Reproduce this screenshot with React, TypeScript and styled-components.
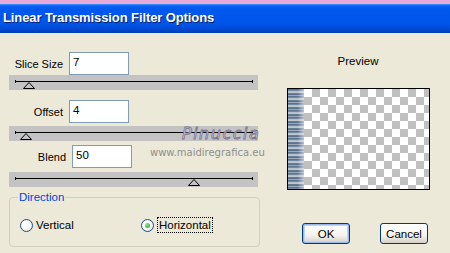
import React from "react";
import styled, { createGlobalStyle } from "styled-components";

const GlobalStyle = createGlobalStyle`
  html, body {
    margin: 0;
    padding: 0;
    background: #ece9d8;
    overflow: hidden;
  }
  * {
    box-sizing: border-box;
  }
`;

const Window = styled.div`
  position: relative;
  width: 450px;
  height: 253px;
  background: #ece9d8;
  font-family: "Liberation Sans", Arial, sans-serif;
  font-size: 11px;
  color: #000;
  overflow: hidden;
`;

const DesktopStrip = styled.div`
  height: 4px;
  background: #e6aad8;
`;

const TitleBar = styled.div`
  height: 29px;
  display: flex;
  align-items: center;
  padding: 0 0 2px 3px;
  background: linear-gradient(
    to bottom,
    #3d95ff 0px,
    #0a5fef 2px,
    #0058ee 5px,
    #0055e8 20px,
    #0047d0 26px,
    #003cb0 29px
  );
  color: #fff;
  font-family: "Liberation Sans", Arial, sans-serif;
  font-weight: bold;
  font-size: 13px;
  letter-spacing: -0.1px;
  text-shadow: 1px 1px 0 #0a1e6e;
`;

const Body = styled.div`
  display: flex;
  padding: 19px 0 0 9px;
`;

const LeftPane = styled.div`
  width: 251px;
  display: flex;
  flex-direction: column;
`;

const FieldRow = styled.div<{ $labelWidth: number; $gapAfter: number }>`
  display: flex;
  align-items: center;
  height: 23px;
  margin-bottom: ${({ $gapAfter }) => $gapAfter}px;

  label {
    width: ${({ $labelWidth }) => $labelWidth}px;
    text-align: right;
    padding-right: 6px;
    font-size: 11px;
  }
`;

const TextBox = styled.div`
  width: 60px;
  height: 23px;
  border: 1px solid #7f9db9;
  background: #fff;
  padding: 3px 0 0 3px;
  font-size: 11.5px;
`;

const Track = styled.div<{ $gapAfter: number }>`
  position: relative;
  height: 15px;
  width: 249px;
  background: #c3c3c3;
  margin-bottom: ${({ $gapAfter }) => $gapAfter}px;
`;

const TrackLine = styled.div`
  position: absolute;
  left: 6px;
  right: 5px;
  top: 6px;
  height: 1px;
  background: #000;

  &::before,
  &::after {
    content: "";
    position: absolute;
    top: -1px;
    width: 1px;
    height: 3px;
    background: #000;
  }
  &::before {
    left: 0;
  }
  &::after {
    right: 0;
  }
`;

const Thumb = styled.svg`
  position: absolute;
  top: 7px;
`;

const Group = styled.fieldset`
  margin: -7px 0 0 0;
  width: 251px;
  height: 56px;
  padding: 14px 0 0 10px;
  border: 1px solid #d0d0bf;
  border-radius: 4px;
  display: flex;
  align-items: center;

  legend {
    color: #0046d5;
    padding: 0 1px;
    margin-left: -2px;
    font-size: 11.5px;
  }
`;

const Radio = styled.div<{ $width: number }>`
  display: flex;
  align-items: center;
  width: ${({ $width }) => $width}px;
  font-size: 11.5px;
`;

const RadioCircle = styled.span<{ $checked?: boolean }>`
  width: 13px;
  height: 13px;
  border-radius: 50%;
  border: 1px solid #1c5180;
  background: radial-gradient(circle at 40% 40%, #fff 30%, #dcdcd4 100%);
  display: flex;
  align-items: center;
  justify-content: center;
  margin-right: 3px;

  &::after {
    content: "";
    display: ${({ $checked }) => ($checked ? "block" : "none")};
    width: 5px;
    height: 5px;
    border-radius: 50%;
    background: radial-gradient(circle at 35% 35%, #8fe38f, #21a121);
  }
`;

const RadioText = styled.span<{ $focused?: boolean }>`
  padding: 1px 1px;
  border: 1px dotted ${({ $focused }) => ($focused ? "#000" : "transparent")};
`;

const RightPane = styled.div`
  flex: 1;
  display: flex;
  flex-direction: column;
  padding: 3px 0 0 27px;
`;

const PreviewLabel = styled.div`
  width: 142px;
  text-align: center;
  font-size: 11.5px;
  height: 33px;
`;

const PreviewBox = styled.div`
  width: 143px;
  height: 102px;
  border: 1px solid #000;
  background-color: #fff;
  background-image: linear-gradient(to right, rgba(236, 240, 245, 0) 60%, rgba(236, 240, 245, 0.6) 100%),
    repeating-linear-gradient(
      to bottom,
      #4f6987 0px,
      #7f93ab 2px,
      #e8ecf0 3px,
      #3c5674 5px,
      #b9c4d2 7px
    ),
    conic-gradient(#fff 25%, #c0c0c0 0 50%, #fff 0 75%, #c0c0c0 0);
  background-size: 16px 100%, 16px 100%, 16px 16px;
  background-repeat: no-repeat, no-repeat, repeat;
  background-position: 0 0, 0 0, 8px 0;
`;

const Buttons = styled.div`
  display: flex;
  gap: 30px;
  margin-top: 33px;
  padding-left: 15px;
`;

const Button = styled.div<{ $default?: boolean }>`
  width: 48px;
  height: 21px;
  border: 1px solid #003c74;
  border-radius: 3px;
  background: linear-gradient(to bottom, #fff 0%, #f4f3ee 60%, #d6d0c5 100%);
  box-shadow: ${({ $default }) =>
    $default ? "inset 0 0 0 1px #98b8ea, inset 0 0 0 2px #c0d4f4" : "none"};
  display: flex;
  align-items: center;
  justify-content: center;
  font-size: 11.5px;
`;

const WatermarkName = styled.div`
  position: absolute;
  left: 182px;
  top: 124px;
  font-family: "DejaVu Sans", sans-serif;
  font-style: italic;
  font-size: 16px;
  letter-spacing: 1.5px;
  color: #dcd8ea;
  -webkit-text-stroke: 0.8px #77728c;
`;

const WatermarkUrl = styled.div`
  position: absolute;
  left: 150px;
  top: 147px;
  font-family: "DejaVu Sans", sans-serif;
  font-size: 10px;
  color: #8e8e8e;
`;

function ThumbIcon({ left }: { left: number }) {
  return (
    <Thumb width="12" height="7" viewBox="0 0 12 7" style={{ left }}>
      <polygon points="6,0.5 11.5,6.5 0.5,6.5" fill="none" stroke="#000" strokeWidth="1" />
    </Thumb>
  );
}

export default function App() {
  return (
    <>
      <GlobalStyle />
      <Window>
        <DesktopStrip />
        <TitleBar>Linear Transmission Filter Options</TitleBar>
        <Body>
          <LeftPane>
            <FieldRow $labelWidth={60} $gapAfter={0}>
              <label>Slice Size</label>
              <TextBox>7</TextBox>
            </FieldRow>
            <Track $gapAfter={10}>
              <TrackLine />
              <ThumbIcon left={14} />
            </Track>
            <FieldRow $labelWidth={60} $gapAfter={3}>
              <label>Offset</label>
              <TextBox>4</TextBox>
            </FieldRow>
            <Track $gapAfter={4}>
              <TrackLine />
              <ThumbIcon left={11} />
            </Track>
            <FieldRow $labelWidth={63} $gapAfter={4}>
              <label>Blend</label>
              <TextBox>50</TextBox>
            </FieldRow>
            <Track $gapAfter={11}>
              <TrackLine />
              <ThumbIcon left={179} />
            </Track>
            <Group>
              <legend>Direction</legend>
              <Radio $width={121}>
                <RadioCircle />
                <span>Vertical</span>
              </Radio>
              <Radio $width={110}>
                <RadioCircle $checked />
                <RadioText $focused>Horizontal</RadioText>
              </Radio>
            </Group>
          </LeftPane>
          <RightPane>
            <PreviewLabel>Preview</PreviewLabel>
            <PreviewBox />
            <Buttons>
              <Button $default>OK</Button>
              <Button>Cancel</Button>
            </Buttons>
          </RightPane>
        </Body>
        <WatermarkName>Pinuccia</WatermarkName>
        <WatermarkUrl>www.maidiregrafica.eu</WatermarkUrl>
      </Window>
    </>
  );
}
